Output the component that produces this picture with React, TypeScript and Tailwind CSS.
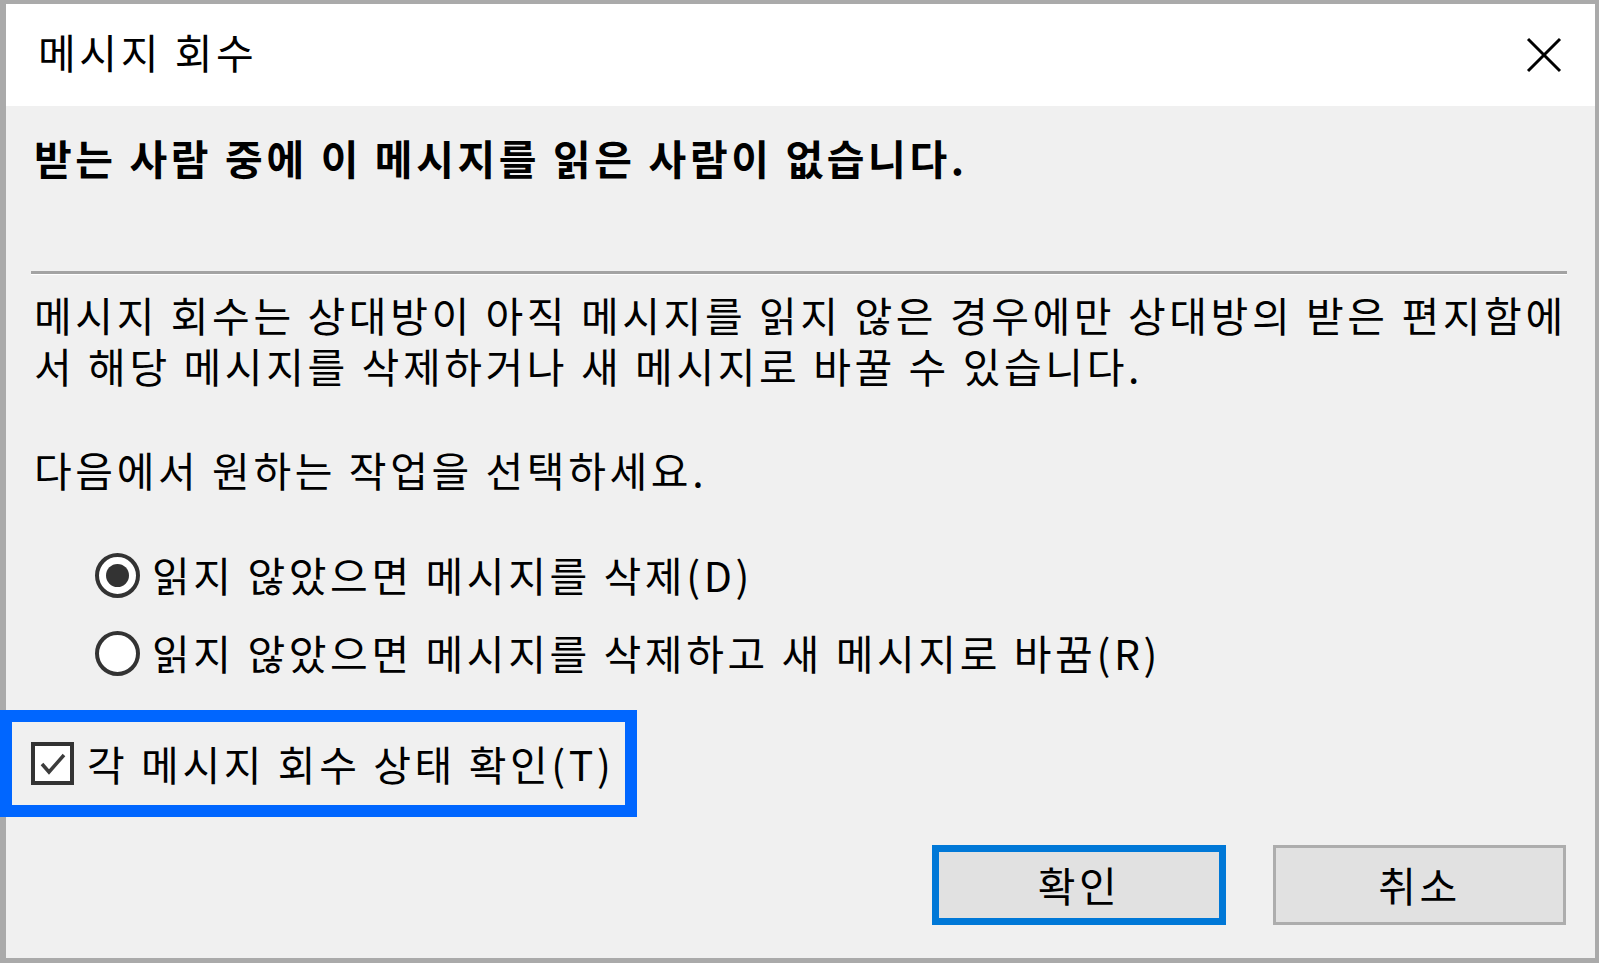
const font = { fontFamily: '"Noto Sans CJK KR", "Noto Sans", sans-serif' };

const CloseIcon = () => (
  <svg width="36" height="36" viewBox="0 0 36 36" className="block">
    <line x1="2" y1="2" x2="34" y2="34" stroke="#000" strokeWidth="3" />
    <line x1="34" y1="2" x2="2" y2="34" stroke="#000" strokeWidth="3" />
  </svg>
);

const Radio = ({ checked, label }: { checked?: boolean; label: string }) => (
  <div className="flex items-center h-[50px] ml-[89px]">
    <div className="w-[45px] h-[45px] rounded-full border-[4px] border-[#333333] bg-white flex items-center justify-center shrink-0">
      {checked && <div className="w-[23px] h-[23px] rounded-full bg-[#333333]" />}
    </div>
    <span className="ml-[12px] whitespace-nowrap">{label}</span>
  </div>
);

export default function App() {
  return (
    <div
      className="w-[1599px] h-[963px] bg-[#f0f0f0] border-[#aaaaaa] border-l-[6px] border-t-[4px] border-r-[4px] border-b-[5px] flex flex-col text-[41px] tracking-[3.6px] text-black"
      style={font}
    >
      <div className="h-[102px] bg-white flex items-center justify-between pl-[32px] pr-[33px] shrink-0">
        <span className="leading-none pb-[8px]">메시지 회수</span>
        <CloseIcon />
      </div>

      <div className="mt-[26px] ml-[28px] font-bold leading-[50px] whitespace-nowrap">
        받는 사람 중에 이 메시지를 읽은 사람이 없습니다.
      </div>

      <div className="mt-[89px] ml-[25px] mr-[28px]">
        <div className="h-[3px] bg-[#a3a3a3]" />
        <div className="h-px bg-white" />
      </div>

      <p className="mt-[14px] ml-[28px] leading-[51px] whitespace-nowrap">
        메시지 회수는 상대방이 아직 메시지를 읽지 않은 경우에만 상대방의 받은 편지함에
        <br />
        서 해당 메시지를 삭제하거나 새 메시지로 바꿀 수 있습니다.
      </p>

      <p className="mt-[53px] ml-[28px] leading-[51px] whitespace-nowrap">다음에서 원하는 작업을 선택하세요.</p>

      <div className="mt-[55px] flex flex-col gap-[28px]">
        <Radio checked label="읽지 않았으면 메시지를 삭제(D)" />
        <Radio label="읽지 않았으면 메시지를 삭제하고 새 메시지로 바꿈(R)" />
      </div>

      <div className="mt-[32px] -ml-[6px] w-[637px] h-[107px] border-[12px] border-[#0066ff] flex items-center pl-[19px]">
        <div className="w-[43px] h-[43px] border-[4px] border-[#333333] bg-white flex items-center justify-center shrink-0">
          <svg width="30" height="30" viewBox="0 0 30 30">
            <polyline points="4,15 11,23 26,6" fill="none" stroke="#3c3c3c" strokeWidth="3.5" />
          </svg>
        </div>
        <span className="ml-[13px] whitespace-nowrap">각 메시지 회수 상태 확인(T)</span>
      </div>

      <div className="mt-[28px] flex justify-end gap-[47px] mr-[29px]">
        <button className="w-[294px] h-[80px] bg-[#e1e1e1] border-[7px] border-[#0078d7] flex items-center justify-center">
          확인
        </button>
        <button className="w-[293px] h-[80px] bg-[#e1e1e1] border-[3px] border-[#adadad] flex items-center justify-center">
          취소
        </button>
      </div>
    </div>
  );
}
